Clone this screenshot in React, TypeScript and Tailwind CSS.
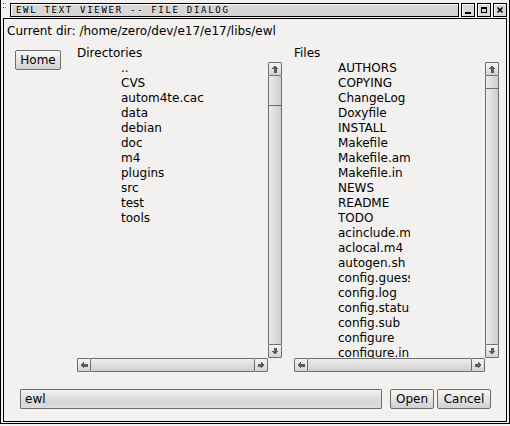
import React from "react";

type Dir = "up" | "down" | "left" | "right";

const rotClass: Record<Dir, string> = {
  up: "",
  right: "rotate-90",
  down: "rotate-180",
  left: "-rotate-90",
};

function Arrow({ dir }: { dir: Dir }) {
  return (
    <svg
      width="8"
      height="8"
      viewBox="0 0 8 8"
      className={rotClass[dir]}
      shapeRendering="crispEdges"
    >
      <polygon points="4,0.5 7.5,4 5.5,4 5.5,7.5 2.5,7.5 2.5,4 0.5,4" fill="#5c5c5c" />
    </svg>
  );
}

function ScrollBtn({ dir }: { dir: Dir }) {
  return (
    <div className="w-[14px] h-[14px] shrink-0 border border-[#6e6e6e] rounded-[1px] bg-[linear-gradient(to_bottom,#f6f6f6,#d2d2d2)] flex items-center justify-center">
      <Arrow dir={dir} />
    </div>
  );
}

function VScroll({ thumbClass }: { thumbClass: string }) {
  return (
    <div className="w-[14px] h-[296px] mt-[2px] flex flex-col shrink-0">
      <ScrollBtn dir="up" />
      <div className="flex-1 flex flex-col border-x border-[#6e6e6e] bg-[linear-gradient(to_right,#ededed,#cdcdcd)]">
        <div className={thumbClass + " border-b border-[#6e6e6e]"} />
      </div>
      <ScrollBtn dir="down" />
    </div>
  );
}

function HScroll() {
  return (
    <div className="h-[14px] w-[191px] flex">
      <ScrollBtn dir="left" />
      <div className="flex-1 border-y border-[#6e6e6e] bg-[linear-gradient(to_bottom,#ededed,#cfcfcf)]" />
      <ScrollBtn dir="right" />
    </div>
  );
}

function Column({
  label,
  items,
  clipClass,
  thumbClass,
}: {
  label: string;
  items: string[];
  clipClass: string;
  thumbClass: string;
}) {
  return (
    <div className="w-[205px] flex flex-col shrink-0">
      <div className="h-[15px] leading-[15px] pt-[1px]">{label}</div>
      <div className="flex h-[298px]">
        <div className="w-[191px] pl-[44px] pt-[1px] overflow-hidden">
          <div className={clipClass + " overflow-hidden"}>
            {items.map((it) => (
              <div key={it} className="h-[15px] leading-[15px] whitespace-nowrap">
                {it}
              </div>
            ))}
          </div>
        </div>
        <VScroll thumbClass={thumbClass} />
      </div>
      <HScroll />
    </div>
  );
}

const dirs = ["..", "CVS", "autom4te.cache", "data", "debian", "doc", "m4", "plugins", "src", "test", "tools"];
const files = [
  "AUTHORS",
  "COPYING",
  "ChangeLog",
  "Doxyfile",
  "INSTALL",
  "Makefile",
  "Makefile.am",
  "Makefile.in",
  "NEWS",
  "README",
  "TODO",
  "acinclude.m4",
  "aclocal.m4",
  "autogen.sh",
  "config.guess",
  "config.log",
  "config.status",
  "config.sub",
  "configure",
  "configure.in",
];

const btn =
  "h-[20px] border border-[#6e6e6e] rounded-[2px] bg-[linear-gradient(to_bottom,#f8f8f8,#d0d0d0)] flex items-center justify-center leading-[15px] shrink-0";

function WinBtn({ children }: { children: React.ReactNode }) {
  return (
    <div className="w-[14px] h-[14px] border border-black bg-[#d8d8d8] shadow-[inset_1px_1px_0_#ffffff] flex items-center justify-center shrink-0">
      {children}
    </div>
  );
}

export default function App() {
  return (
    <div className="w-[510px] h-[426px] bg-[#f2f1ef] text-black text-[12px] font-['DejaVu_Sans',sans-serif]">
      <div className="w-[510px] h-[424px] border-x border-b border-black flex flex-col">
        {/* title bar */}
        <div className="h-[18px] flex pt-[3px] pr-[2px] shrink-0">
          <svg width="9" height="14" viewBox="0 0 9 14" className="shrink-0 -mt-[3px]">
            <rect x="2" y="3" width="1" height="1" fill="#333" />
            <rect x="2" y="7" width="1" height="1" fill="#333" />
            <rect x="4" y="3" width="1" height="1" fill="#999" />
            <rect x="4" y="7" width="1" height="1" fill="#999" />
          </svg>
          <div className="flex-1 h-[14px] border border-black bg-[#d6d6d6] shadow-[inset_1px_1px_0_#ffffff] pl-[5px] flex items-center">
            <span className="font-['DejaVu_Sans_Mono',monospace] text-[9px] leading-[10px] tracking-[1.7px] text-black">
              EWL TEXT VIEWER -- FILE DIALOG
            </span>
          </div>
          <div className="flex gap-[2px] ml-[2px]">
            <WinBtn>
              <div className="w-[6px] h-[2px] bg-black mt-[6px]" />
            </WinBtn>
            <WinBtn>
              <div className="w-[6px] h-[6px] border border-black border-t-2" />
            </WinBtn>
            <WinBtn>
              <svg width="8" height="8" viewBox="0 0 8 8">
                <path d="M1.5 1.5 L6.5 6.5 M6.5 1.5 L1.5 6.5" stroke="#000" strokeWidth="1.6" />
              </svg>
            </WinBtn>
          </div>
        </div>
        {/* client */}
        <div className="mx-[2px] mb-[1px] flex-1 border border-black flex flex-col">
          <div className="pl-[3px] pt-[5px] leading-[15px] h-[19px]">
            Current dir: /home/zero/dev/e17/e17/libs/ewl
          </div>
          <div className="flex mt-[7px]">
            <div className={btn + " w-[46px] ml-[11px] mt-[5px] self-start"}>Home</div>
            <div className="ml-[16px]">
              <Column label="Directories" items={dirs} clipClass="w-[83px]" thumbClass="h-[30px]" />
            </div>
            <div className="ml-[12px]">
              <Column label="Files" items={files} clipClass="w-[72px]" thumbClass="h-[13px]" />
            </div>
          </div>
          <div className="flex mt-[17px] items-start">
            <div className="ml-[16px] w-[362px] h-[20px] border border-[#6e6e6e] rounded-[1px] bg-[linear-gradient(to_bottom,#f1f1f1,#d6d6d6_70%,#dddddd)] pl-[4px] flex items-center leading-[15px]">
              ewl
            </div>
            <div className={btn + " w-[44px] ml-[8px]"}>Open</div>
            <div className={btn + " w-[54px] ml-[3px]"}>Cancel</div>
          </div>
        </div>
      </div>
    </div>
  );
}
